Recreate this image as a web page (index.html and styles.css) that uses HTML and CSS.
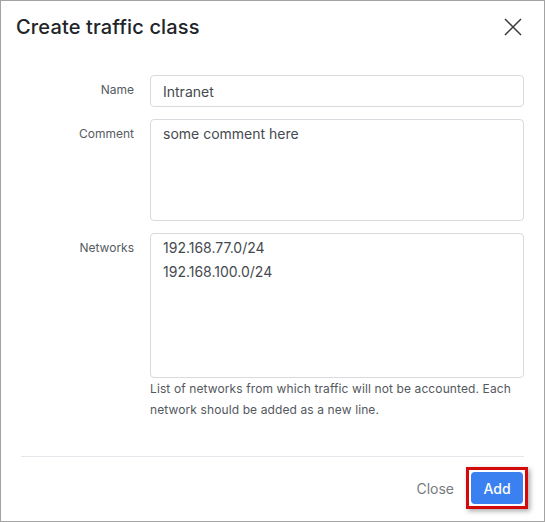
FILE: index.html
```html
<!DOCTYPE html>
<html lang="en">
<head>
<meta charset="utf-8">
<title>Create traffic class</title>
<link rel="stylesheet" href="styles.css">
</head>
<body>
<div class="modal">
  <div class="modal-header">
    <h1 class="modal-title">Create traffic class</h1>
    <button class="close-x" type="button" aria-label="Close">
      <svg width="18" height="18" viewBox="0 0 18 18"><path d="M1 1L17 17M17 1L1 17" stroke="#3a3a3a" stroke-width="1.5" fill="none"/></svg>
    </button>
  </div>
  <div class="modal-body">
    <div class="form-row">
      <label class="form-label" for="name">Name</label>
      <input class="form-input" id="name" type="text" value="Intranet">
    </div>
    <div class="form-row">
      <label class="form-label" for="comment">Comment</label>
      <textarea class="form-input area area-comment" id="comment">some comment here</textarea>
    </div>
    <div class="form-row">
      <label class="form-label" for="networks">Networks</label>
      <div class="field">
        <textarea class="form-input area area-networks" id="networks">192.168.77.0/24
192.168.100.0/24</textarea>
        <div class="help">List of networks from which traffic will not be accounted. Each network should be added as a new line.</div>
      </div>
    </div>
  </div>
  <div class="separator"></div>
  <div class="modal-footer">
    <button class="btn btn-link" type="button">Close</button>
    <span class="highlight"><button class="btn btn-primary" type="button">Add</button></span>
  </div>
</div>
</body>
</html>
```

FILE: styles.css
```css
html, body {
  margin: 0;
  padding: 0;
  background: #ffffff;
}

body {
  font-family: Inter, "Noto Sans", "Liberation Sans", sans-serif;
  color: #212529;
}

.modal {
  box-sizing: border-box;
  width: 545px;
  height: 522px;
  border: 1px solid #a3a3a3;
  background: #ffffff;
  display: flex;
  flex-direction: column;
}

.modal-header {
  display: flex;
  align-items: center;
  justify-content: space-between;
  padding: 14px 22px 0 15px;
}

.modal-title {
  margin: 0;
  font-size: 20px;
  line-height: 24px;
  font-weight: 500;
  letter-spacing: 0.15px;
  color: #212529;
}

.close-x {
  border: 0;
  background: none;
  padding: 0;
  width: 18px;
  height: 18px;
  display: block;
  cursor: pointer;
}

.close-x svg {
  display: block;
}

.modal-body {
  padding: 36px 20px 0 20px;
  display: flex;
  flex-direction: column;
  gap: 12px;
}

.form-row {
  display: grid;
  grid-template-columns: 113px 1fr;
  column-gap: 16px;
  align-items: start;
}

.form-label {
  text-align: right;
  font-size: 12px;
  line-height: 18px;
  padding-top: 6px;
  color: #555b61;
}

.form-input {
  box-sizing: border-box;
  display: block;
  width: 100%;
  margin: 0;
  height: 32px;
  padding: 0 12px;
  border: 1px solid #d7dadf;
  border-radius: 4px;
  font-family: Inter, "Noto Sans", "Liberation Sans", sans-serif;
  font-size: 14px;
  line-height: 30px;
  color: #454a50;
  background: #ffffff;
  outline: none;
}

.area {
  resize: none;
  padding: 2px 12px;
  line-height: 24px;
  overflow: hidden;
}

.area-comment {
  height: 102px;
}

.area-networks {
  height: 145px;
}

.field {
  display: flex;
  flex-direction: column;
}

.help {
  font-size: 12px;
  line-height: 21px;
  letter-spacing: 0.11px;
  color: #53585e;
}

.separator {
  height: 1px;
  background: #e4e7eb;
  margin: 36px 20px 0 20px;
}

.modal-footer {
  display: flex;
  justify-content: flex-end;
  align-items: center;
  gap: 4px;
  padding: 10px 16px 0 16px;
}

.btn {
  font-family: Inter, "Noto Sans", "Liberation Sans", sans-serif;
  font-size: 14px;
  border: 0;
  border-radius: 4px;
  height: 32px;
  cursor: pointer;
}

.btn-link {
  background: none;
  color: #757b82;
  padding: 0 8px;
}

.btn-primary {
  display: block;
  background: #3a80f0;
  color: #ffffff;
  font-weight: 500;
  width: 52px;
  padding: 0;
}

.highlight {
  display: block;
  border: 3px solid #d20a0a;
  padding: 2px;
  box-shadow: 2px 2px 5px rgba(0, 0, 0, 0.35);
}
```
